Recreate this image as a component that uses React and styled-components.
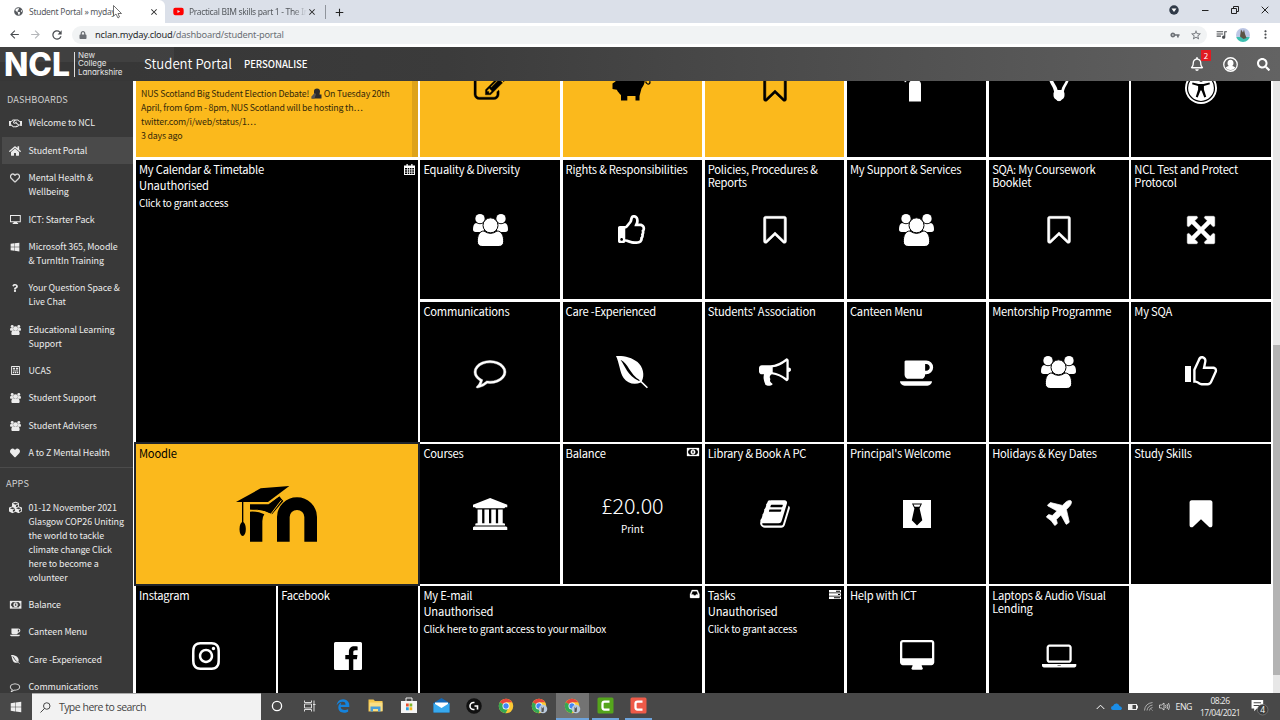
import React from "react";
import styled, { createGlobalStyle, css } from "styled-components";
import {
  FaHome,
  FaRegHeart,
  FaHeart,
  FaWindows,
  FaQuestion,
  FaRegHandshake,
  FaInstagram,
  FaSearch,
  FaRegThumbsUp,
  FaRegBell,
  FaCubes,
  FaGlobeAmericas,
  FaEdgeLegacy,
  FaYoutube,
  FaLock,
} from "react-icons/fa";
import {
  MdArrowBack,
  MdArrowForward,
  MdRefresh,
  MdStarBorder,
  MdQueueMusic,
  MdMoreVert,
  MdVpnKey,
  MdClose,
  MdAdd,
} from "react-icons/md";

const GlobalStyle = createGlobalStyle`
  * {
    box-sizing: border-box;
  }
  body {
    margin: 0;
    overflow: hidden;
    font-family: "Noto Sans CJK SC", "Open Sans", sans-serif;
  }
  svg {
    display: block;
    flex: none;
  }
`;

/* ---------- icons ---------- */

const paths = {
  comment: [
    "0 0 1792 1792",
    "M896 384q-204 0-381.5 69.5t-282 187.5-104.5 255q0 112 71.5 213.5t201.5 175.5l87 50-27 96q-24 91-70 172 152-63 275-171l43-38 57 6q69 8 130 8 204 0 381.5-69.5t282-187.5 104.5-255-104.5-255-282-187.5-381.5-69.5zm896 512q0 174-120 321.5t-326 233-450 85.5q-70 0-145-8-198 175-460 242-49 14-114 22h-5q-15 0-27-10.5t-16-27.5v-1q-3-4-.5-12t2-10 4.5-9.5l6-9 7-8.5 8-9q7-8 31-34.5t34.5-38 31-39.5 32.5-51 27-59 26-76q-157-89-247.5-220t-90.5-281q0-174 120-321.5t326-233 450-85.5 450 85.5 326 233 120 321.5z",
    24,
  ],
  bookmarkO: [
    "0 0 1792 1792",
    "M1408 256h-1024v1242l423-406 89-85 89 85 423 406v-1242zm12-128q23 0 44 9 33 13 52.5 41t19.5 62v1289q0 34-19.5 62t-52.5 41q-19 8-44 8-48 0-83-32l-441-424-441 424q-36 33-83 33-23 0-44-9-33-13-52.5-41t-19.5-62v-1289q0-34 19.5-62t52.5-41q21-9 44-9h1048z",
    28,
  ],
  bookmark: [
    "0 0 1792 1792",
    "M1420 128q23 0 44 9 33 13 52.5 41t19.5 62v1289q0 34-19.5 62t-52.5 41q-19 8-44 8-48 0-83-32l-441-424-441 424q-36 33-83 33-23 0-44-9-33-13-52.5-41t-19.5-62v-1289q0-34 19.5-62t52.5-41q21-9 44-9h1048z",
  ],
  bullhorn: [
    "0 0 1792 1792",
    "M1664 640q53 0 90.5 37.5t37.5 90.5-37.5 90.5-90.5 37.5v384q0 52-38 90t-90 38q-417-347-812-380-58 19-91 66t-31 100.5 40 92.5q-20 33-23 65.5t6 58 33.5 55 48 50 61.5 50.5q-29 58-111.5 83t-168.5 11.5-132-55.5q-7-23-29.5-87.5t-32-94.5-23-89-15-101 3.5-98.5 22-110.5h-122q-66 0-113-47t-47-113v-192q0-66 47-113t113-47h480q435 0 896-384 52 0 90 38t38 90v384zm-128 604v-954q-394 302-768 343v270q377 42 768 341z",
  ],
  coffee: [
    "0 0 1920 1792",
    "M1664 640q0-80-56-136t-136-56h-64v384h64q80 0 136-56t56-136zm-1664 768h1792q0 106-75 181t-181 75h-1280q-106 0-181-75t-75-181zm1856-768q0 159-112.5 271.5t-271.5 112.5h-64v32q0 92-66 158t-158 66h-704q-92 0-158-66t-66-158v-736q0-26 19-45t45-19h1152q159 0 271.5 112.5t112.5 271.5z",
  ],
  university: [
    "0 0 1920 1792",
    "M960 0l960 384v128h-128q0 26-20.5 45t-48.5 19h-1526q-28 0-48.5-19t-20.5-45h-128v-128zm-704 640h256v768h128v-768h256v768h128v-768h256v768h128v-768h256v768h59q28 0 48.5 19t20.5 45v64h-1664v-64q0-26 20.5-45t48.5-19h59v-768zm1595 960q28 0 48.5 19t20.5 45v128h-1920v-128q0-26 20.5-45t48.5-19h1782z",
  ],
  book: [
    "0 0 1792 1792",
    "M1703 478q40 57 18 129l-275 906q-19 64-76.5 107.5t-122.5 43.5h-923q-77 0-148.5-53.5t-99.5-131.5q-24-67-2-127 0-4 3-27t4-37q1-8-3-21.5t-3-19.5q2-11 8-21t16.5-23.5 16.5-23.5q23-38 45-91.5t30-91.5q3-10 .5-30t-.5-28q3-11 17-28t17-23q21-36 42-92t25-90q1-9-2.5-32t.5-28q4-13 22-30.5t22-22.5q19-26 42.5-84.5t27.5-96.5q1-8-3-25.5t-2-26.5q2-8 9-18t18-23 17-21q8-12 16.5-30.5t15-35 16-36 19.5-32 26.5-23.5 36-11.5 47.5 5.5l-1 3q38-9 51-9h761q74 0 114 56t18 130l-274 906q-36 119-71.5 153.5t-128.5 34.5h-869q-27 0-38 15-11 16-1 43 24 70 144 70h923q29 0 56-15.5t35-41.5l300-987q7-22 5-57 38 15 59 43zm-1064 2q-4 13 2 22.5t20 9.500h608q13 0 25.500-9.500t16.500-22.500l21-64q4-13-2-22.500t-20-9.500h-608q-13 0-25.500 9.500t-16.500 22.500zm-83 256q-4 13 2 22.500t20 9.500h608q13 0 25.500-9.500t16.500-22.500l21-64q4-13-2-22.500t-20-9.500h-608q-13 0-25.500 9.500t-16.500 22.500z",
  ],
  plane: [
    "0 0 1792 1792",
    "M1568 160q44 52 12 148t-108 172l-161 161 160 696q5 19-12 33l-128 96q-7 6-19 6-4 0-7-1-15-3-21-16l-279-508-259 259 53 194q5 17-8 31l-96 96q-9 9-23 9h-2q-15-2-24-13l-189-252-252-189q-11-7-13-23-1-13 9-25l96-97q9-9 23-9 6 0 8 1l194 53 259-259-508-279q-14-8-17-24-2-16 9-27l128-128q14-13 30-8l665 159 160-160q76-76 172-108t148 12z",
    40,
  ],
  desktop: [
    "-64 0 1920 1792",
    "M1728 992v-832q0-13-9.5-22.5t-22.5-9.5h-1600q-13 0-22.5 9.5t-9.5 22.5v832q0 13 9.5 22.5t22.5 9.5h1600q13 0 22.5-9.5t9.5-22.5zm128-832v1088q0 66-47 113t-113 47h-544q0 37 16 77.5t32 71 16 43.5q0 26-19 45t-45 19h-512q-26 0-45-19t-19-45q0-14 16-44t32-70 16-78h-544q-66 0-113-47t-47-113v-1088q0-66 47-113t113-47h1600q66 0 113 47t47 113z",
  ],
  laptop: [
    "0 0 1920 1792",
    "M416 1280q-66 0-113-47t-47-113v-704q0-66 47-113t113-47h1088q66 0 113 47t47 113v704q0 66-47 113t-113 47h-1088zm-32-864v704q0 13 9.5 22.5t22.5 9.5h1088q13 0 22.5-9.5t9.5-22.5v-704q0-13-9.5-22.5t-22.5-9.5h-1088q-13 0-22.5 9.5t-9.5 22.5zm1376 928h160v96q0 40-47 68t-113 28h-1600q-66 0-113-28t-47-68v-96h1760zm-720 96q16 0 16-16t-16-16h-160q-16 0-16 16t16 16h160z",
  ],
  arrows: [
    "0 0 1792 1792",
    "M1411 541l-355 355 355 355 144-144q29-31 70-14 39 17 39 59v448q0 26-19 45t-45 19h-448q-42 0-59-40-17-39 14-69l144-144-355-355-355 355 144 144q31 30 14 69-17 40-59 40h-448q-26 0-45-19t-19-45v-448q0-42 40-59 39-17 69 14l144 144 355-355-355-355-144 144q-19 19-45 19-12 0-24-5-40-17-40-59v-448q0-26 19-45t45-19h448q42 0 59 40 17 39-14 69l-144 144 355 355 355-355-144-144q-31-30-14-69 17-40 59-40h448q26 0 45 19t19 45v448q0 42-39 59-13 5-25 5-26 0-45-19z",
    30,
  ],
  pencil: [
    "0 0 1792 1792",
    "M888 1184l116-116-152-152-116 116v56h96v96h56zm440-720q-16-16-33 1l-350 350q-17 17-1 33t33-1l350-350q17-17 1-33zm80 594v190q0 119-84.5 203.5t-203.5 84.5h-832q-119 0-203.5-84.5t-84.5-203.5v-832q0-119 84.5-203.5t203.5-84.5h832q63 0 117 25 15 7 18 23 3 17-9 29l-49 49q-14 14-32 8-23-6-45-6h-832q-66 0-113 47t-47 113v832q0 66 47 113t113 47h832q66 0 113-47t47-113v-126q0-13 9-22l64-64q15-15 35-7t20 29zm-96-738l288 288-672 672h-288v-288zm444 132l-92 92-288-288 92-92q28-28 68-28t68 28l152 152q28 28 28 68t-28 68z",
    20,
  ],
  thumb: [
    "0 0 32 32",
    "M0 10h6v16H0zM16.800 0c3 0 5.300 2.500 4.700 5.500l-1 5H28c3 0 4.800 2.600 4 5.200l-4.800 10.500c-.9 2-2.200 3.200-4.600 3.200h-6c-2.400 0-4-2.200-6-2.600H8.200V13.500L12.600 4c.7-2 1.600-4 4.200-4zm.2 2.400c-1 0-1.500 1-2 2.200l-4.400 9.500v10.300c2.600.2 4.200 2.500 6.400 2.500h5.600c1.200 0 2-.6 2.500-1.700l4.600-10.200c.4-1.200-.3-2.100-1.600-2.100H17.600l1.600-7.600c.3-1.500-.7-2.900-2.200-2.900z",
  ],
  leaf: [
    "0 0 32 32",
    "M0 0c7-.6 16 1.300 21.500 6 5.400 4.700 7.600 13 4.300 19.200l6.200 6-1.200 1-6-5.600c-6.400 2.600-13.300 1-17.200-4.600C3.700 16.200 3.500 7.300 0 0zm4.500 3.800c4.800 6.300 6.600 15.600 18.500 21.300l.8-.9C13.500 18.300 12.700 7.500 4.500 3.800z",
  ],
  facebook: [
    "0 0 28 28",
    "M1.500 0h25A1.500 1.500 0 0 1 28 1.500v25a1.500 1.500 0 0 1-1.500 1.500h-7.200V17.200h3.600l.6-4.200h-4.200v-2.700c0-1.200.4-2 2.100-2h2.200V4.500c-.4 0-1.700-.2-3.300-.2-3.200 0-5.400 2-5.400 5.600V13h-3.600v4.200h3.600V28H1.500A1.500 1.500 0 0 1 0 26.500v-25A1.500 1.500 0 0 1 1.500 0z",
  ],
  tie: [
    "0 0 28 28",
    "M0 0h28v28H0zM9 3.400l2.400 5.200L8.800 20.300l5.200 5.200 5.300-5.200L16.600 8.600 19 3.400zm1.500 1h7l-1.200 2.400h-4.600z",
  ],
  money: [
    "0 0 24 16",
    "M0 0h24v16H0zM5 2.200a3 3 0 0 1-3 3v5.600a3 3 0 0 1 3 3h14a3 3 0 0 1 3-3V5.200a3 3 0 0 1-3-3zM12 3c2.800 0 4.500 2 4.500 5s-1.700 5-4.500 5-4.500-2-4.500-5S9.200 3 12 3zm-1.500 2.500v5h3v-5z",
    0.6,
  ],
  calendar: [
    "0 0 22 22",
    "M5 0h2.500v3h7V0H17v3h5v19H0V3h5zM2 8v3h4V8zm5.500 0v3h3V8zm4.500 0v3h3V8zm4.500 0v3H20V8zM2 12.500v3h4v-3zm5.500 0v3h3v-3zm4.500 0v3h3v-3zm4.500 0v3H20v-3zM2 17v3h4v-3zm5.500 0v3h3v-3zm4.500 0v3h3v-3zm4.500 0v3H20v-3z",
  ],
  inbox: ["0 0 20 17", "M4 0h12l4 9v6.500a1.500 1.500 0 0 1-1.500 1.500h-17A1.500 1.500 0 0 1 0 15.500V9zm1.500 2.500L2.800 9.300H7l1.400 2.500h3.200L13 9.300h4.200l-2.700-6.800z", 0.6],
  tasks: ["0 0 24 18", "M0 0h24v5H0zM0 6.500h24v5H0zM0 13h24v5H0zM14 1.500v2h8v-2zM18 8v2h4V8zM10 14.500v2h12v-2z"],
  monitor: ["0 0 24 20", "M0 0h24v16h-8v2h2v2H6v-2h2v-2H0zM2.200 2.200v11.600h19.600V2.200z"],
  ucas: [
    "0 0 20 20",
    "M2 0h16a2 2 0 0 1 2 2v16a2 2 0 0 1-2 2H2a2 2 0 0 1-2-2V2a2 2 0 0 1 2-2zm0 2v16h16V2zM4 4h5v4H4zM11 4h5v4h-5zM4 10h12v1.500H4zM4 13h3v3H4zM8.500 13h3v3h-3zM13 13h3v3h-3z",
  ],
  piggy: [
    "0 0 32 32",
    "M-3.500 11.500l3-2V5H28c1.500 3 .8 7.500-2.500 11.500L23.500 24v4.500h-4V24h-8.200v4.500H5V23C3.500 22 1.700 19.500.8 17.800L-3.500 17zM29 9.500c1 4.500 7 4 5.300-.5L33 9.500c1.200 2.300-2 3-2.500 0z",
  ],
  extinguisher: ["0 0 32 32", "M8 29.500V12c0-2 2-3.600 3-3.800V5h6v3.200c1.200.4 3 2 3 3.800v17.500zM3 8l6-4v2l-5 4.500z"],
  bulb: [
    "0 0 32 32",
    "M6.500 3v6c1 3.400 4 6 4.600 11-.6.600-.6 1.600-.6 2.200 0 1 0 1.800.2 2.600.4 1.600 1.700 2.400 2.900 3.200 1 1.600 3.800 1.600 4.800 0 1.200-.8 2.500-1.600 2.900-3.200.2-.8.200-1.600.2-2.600 0-.6 0-1.600-.6-2.200.6-5 3.600-7.600 4.600-11V3h-2.500v5.500c-1 3-4 5.500-4.600 9.500h-3.800c-.6-4-3.600-6.500-4.600-9.500V3z",
  ],
};

// third entry of a path is an optional outline that thickens the glyph
const Glyph = ({ name, h = 32 }) => {
  const [box, d, weight] = paths[name];
  const [, , bw, bh] = box.split(" ").map(Number);
  return (
    <svg width={(h * bw) / bh} height={h} viewBox={box} fill="currentColor" fillRule="evenodd" overflow="visible">
      <path d={d} stroke={weight ? "currentColor" : "none"} strokeWidth={weight || 0} />
    </svg>
  );
};

const People = ({ w = 35, gap = "#000" }) => (
  <svg width={w} height={(w * 32) / 35} viewBox="0 0 105 96" fill="currentColor">
    <circle cx="21" cy="14" r="14" />
    <circle cx="84" cy="14" r="14" />
    <path d="M9 27q12 7 24 0V54H8Q0 54 0 46 0 30 9 27zM96 27q-12 7-24 0V54h25q8 0 8-8 0-16-9-19z" />
    <g stroke={gap} strokeWidth="3">
      <path d="M33 51q19.500 14 39 0c14 0 20 14 20 31q0 15.500-15 15.500H28Q13 97.500 13 82C13 65 19 51 33 51z" />
      <circle cx="52.500" cy="34" r="22.500" />
    </g>
  </svg>
);

const Access = () => (
  <svg width="32" height="32" viewBox="0 0 32 32">
    <circle cx="16" cy="16" r="16" fill="#fff" />
    <circle cx="16" cy="16" r="13.500" fill="none" stroke="#000" strokeWidth="1.200" />
    <circle cx="16" cy="7.500" r="2.200" />
    <path d="M7.500 10.500l6 1.600h5l6-1.600.4 1.800-6 1.700v3.500l2.300 7.300-1.900.7-2.800-7h-1l-2.800 7-1.900-.7 2.300-7.300V14l-6-1.700z" />
  </svg>
);

const MoodleLogo = () => (
  <svg width="85" height="60" viewBox="705 73 255 180">
    <path d="M853 246V172a41 40 0 0 1 82 0V246" fill="none" stroke="#000" strokeWidth="38" />
    <path d="M753 246v-90q20-2 43 8-6 8-6 20v62z" />
    <path d="M711 127L785 86 871 79 807 127z" />
    <path d="M753 133h54l34-24 12 15-34 40-23-10-43-4z" />
    <path d="M753 152q25-2 38 3l24 9 32-42" fill="none" stroke="#fbb91c" strokeWidth="3" />
    <path d="M753 132h55l34-25 10 12" fill="none" stroke="#fbb91c" strokeWidth="3.500" />
    <path d="M731 124v66" stroke="#000" strokeWidth="4" />
    <ellipse cx="731" cy="208" rx="9.500" ry="21" />
  </svg>
);

const UserCircle = () => (
  <svg width="15" height="15" viewBox="0 0 30 30">
    <circle cx="15" cy="15" r="13.500" fill="none" stroke="#fff" strokeWidth="2.600" />
    <path d="M15 5.500c4 0 6 2.800 6 6.500 0 3-1.200 5-2.800 6 3 .8 5.800 2 6.600 3.500A12 12 0 0 1 15 26a12 12 0 0 1-9.800-4.500c.8-1.500 3.600-2.700 6.600-3.500C10.200 17 9 15 9 12c0-3.700 2-6.500 6-6.500z" fill="#fff" />
  </svg>
);

/* ---------- browser chrome ---------- */

const Screen = styled.div`
  width: 1280px;
  height: 720px;
  display: flex;
  flex-direction: column;
  overflow: hidden;
  background: #fff;
`;

const TabStrip = styled.div`
  height: 23px;
  flex: none;
  display: flex;
  background: #dbe0e9;
  font-family: "Noto Sans", sans-serif;
  font-size: 8.5px;
  color: #55595e;
`;

const Tab = styled.div`
  width: ${(p) => (p.$active ? 165 : 160)}px;
  display: flex;
  align-items: center;
  padding: 0 6px 0 ${(p) => (p.$active ? 14 : 8)}px;
  border-radius: 0 6px 0 0;
  background: ${(p) => (p.$active ? "#fff" : "transparent")};
  white-space: nowrap;

  span {
    width: ${(p) => (p.$active ? 120 : 118)}px;
    margin-left: ${(p) => (p.$active ? 6 : 5)}px;
    letter-spacing: ${(p) => (p.$active ? -0.28 : -0.33)}px;
    ${(p) =>
      !p.$active &&
      css`
        mask-image: linear-gradient(90deg, #000 88%, transparent);
      `}
  }
`;

const NewTab = styled.div`
  display: flex;
  align-items: center;
  height: 14px;
  margin-top: 5px;
  padding-left: 7px;
  border-left: 1px solid #8f949b;
  color: #222;
`;

const WindowButtons = styled.div`
  margin-left: auto;
  display: flex;
  align-items: center;
  gap: 22px;
  padding: 0 11px 3px 0;
  color: #222;
`;

const Toolbar = styled.div`
  height: 24px;
  flex: none;
  display: flex;
  align-items: center;
  gap: 8px;
  padding: 0 8px 1px;
  background: #fff;
  color: #4a4d51;
`;

const Address = styled.div`
  flex: 1;
  height: 18px;
  display: flex;
  align-items: center;
  padding: 0 5px 0 7px;
  border-radius: 9px;
  background: #f1f3f4;
  font-family: "Noto Sans", sans-serif;
  font-size: 9.3px;
  color: #6b6f74;

  p {
    flex: 1;
    margin: 0 0 0 8px;
    letter-spacing: -0.22px;
  }
  b {
    font-weight: 400;
    color: #26282b;
  }
  svg + svg {
    margin-left: 10px;
  }
`;

const Avatar = styled.div`
  width: 14px;
  height: 14px;
  margin: 0 1px 0 0;
  border-radius: 50%;
  background: linear-gradient(#bcc6e4 65%, #3dbfb0 65%);
  display: flex;
  justify-content: center;
`;

/* ---------- portal ---------- */

const Portal = styled.div`
  height: 646px;
  flex: none;
  display: flex;
  flex-direction: column;
`;

const Header = styled.header`
  height: 34px;
  flex: none;
  display: flex;
  align-items: center;
  padding: 0 10px 0 5px;
  background: linear-gradient(#ffffff0c, #ffffff0c) 0 0 / 174px 15px no-repeat,
    linear-gradient(90deg, #373737 10%, #3b3b3b 35%, #636363);
  color: #fff;
`;

const CollegeName = styled.div`
  width: 60px;
  height: 25px;
  margin-left: 3px;
  padding-left: 3px;
  border-left: 1px solid #ddd;
  font: 8px/8.7px Inter, sans-serif;
  font-feature-settings: "cv11";
  letter-spacing: -0.05px;
  color: #e4e4e4;

  div {
    margin-top: -1px;
  }
`;

const PageTitle = styled.h1`
  margin: 0 0 0 10px;
  width: 100px;
  font-weight: 350;
  font-size: 13.2px;
  line-height: 20px;
  letter-spacing: 0;
  white-space: nowrap;
`;

const Personalise = styled.div`
  font-weight: 500;
  font-size: 9.6px;
  line-height: 20px;
  letter-spacing: -0.05px;
`;

const HeaderIcons = styled.div`
  position: relative;
  margin-left: auto;
  display: flex;
  align-items: center;
  gap: 19px;
`;

const Badge = styled.span`
  position: absolute;
  left: 11px;
  top: -7px;
  width: 10px;
  height: 11px;
  background: #e01b22;
  font-size: 8px;
  line-height: 11px;
  text-align: center;
`;

const Body = styled.div`
  flex: 1;
  display: flex;
  overflow: hidden;
`;

const Sidebar = styled.nav`
  width: 133px;
  height: 100%;
  flex: none;
  overflow: hidden;
  background: #393939;
  color: #ececec;
`;

const SectionTitle = styled.div`
  height: 28.8px;
  padding: 9px 0 0 7px;
  font-size: 9.2px;
  line-height: 19px;
  color: #cfcfcf;
  letter-spacing: 0.1px;

  & ~ & {
    height: 27.5px;
    padding: 6.5px 0 0 6px;
    border-top: 1px solid #4b4b4b;
  }
`;

const NavItem = styled.div`
  display: flex;
  margin-left: 2px;
  padding: 6.68px 0;
  background: ${(p) => (p.$active ? "#4a4a4a" : "transparent")};
  font-size: 8.9px;
  line-height: 14px;
  letter-spacing: -0.08px;
  white-space: pre;

  i {
    width: 26.5px;
    height: 14px;
    display: flex;
    align-items: center;
    justify-content: center;
  }
`;

const Board = styled.main`
  flex: 1;
  overflow: hidden;
  padding-left: 2px;
  border-left: 1px solid #fff;
`;

const Grid = styled.div`
  display: grid;
  grid-template-columns: repeat(8, 139.5px);
  grid-auto-rows: 139.4px;
  gap: 2.7px;
  margin-top: -63px;
`;

const Tile = styled.section`
  position: relative;
  display: flex;
  align-items: center;
  justify-content: center;
  grid-column: span ${(p) => p.$w || 1};
  grid-row: span ${(p) => p.$h || 1};
  background: ${(p) => (p.$gold ? "#fbb91c" : "#000")};
  color: ${(p) => (p.$gold ? "#000" : "#fff")};
  ${(p) =>
    p.$focus &&
    css`
      outline: 2px solid #20242b;
    `}
`;

/* text sits over the centred icon */
const TileText = styled.div`
  position: absolute;
  left: 3px;
  top: 2.5px;
  right: 3px;
  font-size: 11.2px;
  line-height: 13.5px;
  letter-spacing: -0.22px;
  white-space: pre;

  p {
    margin: 0;
    padding-top: 3px;
    letter-spacing: -0.14px;
  }
  small {
    display: block;
    padding-top: 3.5px;
    font-size: 10px;
    letter-spacing: -0.23px;
  }
`;

const Corner = styled.div`
  position: absolute;
  right: 3px;
  top: 4px;
`;

const Tweet = styled.div`
  align-self: stretch;
  flex: 1;
  padding: 69px 0 0 5px;
  border-right: 6px solid #dea31b;
  font-size: 8.8px;
  line-height: 14px;
  letter-spacing: -0.17px;
  white-space: pre;
  color: #35290a;
`;

const Amount = styled.div`
  padding-top: 3px;
  text-align: center;
  font-weight: 300;
  font-size: 21.5px;
  line-height: 26px;
  letter-spacing: -0.1px;

  div {
    padding-top: 2px;
    font-weight: 400;
    font-size: 10px;
    line-height: 18px;
    letter-spacing: 0;
  }
`;

const Scrollbar = styled.div`
  width: 7px;
  height: 100%;
  flex: none;
  padding-top: 264px;
  background: #e7e7e7;

  div {
    height: 330px;
    background: #b3b3b3;
  }
`;

/* ---------- taskbar ---------- */

const Taskbar = styled.footer`
  height: 27px;
  flex: none;
  display: flex;
  align-items: stretch;
  background: #484848;
  color: #eee;
  font-family: "Open Sans", sans-serif;
`;

const StartButton = styled.div`
  width: 32px;
  display: grid;
  place-items: center;
`;

const SearchBox = styled.div`
  width: 229px;
  display: flex;
  align-items: center;
  gap: 8px;
  padding-left: 8px;
  background: #f2f2f2;
  border-top: 1px solid #aaa;
  color: #444;
  font-size: 10.5px;
  letter-spacing: -0.6px;
  word-spacing: 0.5px;
`;

const AppButton = styled.div`
  width: ${(p) => (p.$open && !p.$active ? 26.8 : 32.8)}px;
  margin: 0 ${(p) => (p.$open && !p.$active ? 3 : 0)}px;
  display: grid;
  place-items: center;
  background: ${(p) => (p.$active ? "#737373" : "transparent")};
  border-bottom: 2px solid ${(p) => (p.$open ? "#6ea4dc" : "transparent")};
`;

const Tray = styled.div`
  margin-left: auto;
  display: flex;
  align-items: center;
  padding-right: 11px;
  font-size: 8.8px;
  letter-spacing: -0.5px;

  svg {
    margin-right: 6px;
  }
`;

const Clock = styled.div`
  width: 40px;
  margin: 0 11px 0 8px;
  text-align: center;
  font-size: 8.5px;
  line-height: 12px;
`;

const Chrome = ({ badge }) => (
  <svg width="17" height="16" viewBox="0 0 34 32">
    <circle cx="16" cy="16" r="14.500" fill="#fcc934" />
    <path d="M16 16L3.500 8.700A14.500 14.500 0 0 1 28.500 8.700H16z" fill="#e8453c" />
    <path d="M16 16L3.500 8.700A14.500 14.500 0 0 0 15 30.500l6-11z" fill="#34a853" />
    <circle cx="16" cy="16" r="7" fill="#fff" />
    <circle cx="16" cy="16" r="5.400" fill="#4285f4" />
    {badge && (
      <g>
        <circle cx="24" cy="22" r="8.500" fill="#b9c9dc" />
        <path d="M21 17l2 4 2-4 1 5-1 6h-4z" fill="#555" />
      </g>
    )}
  </svg>
);

const Camtasia = ({ color }) => (
  <svg width="17" height="17" viewBox="0 0 34 34">
    <rect x="1" y="1" width="32" height="32" rx="3" fill={color} />
    <path d="M25 9H15q-4 0-4 4v8q0 4 4 4h10" fill="none" stroke="#fff" strokeWidth="4.500" />
  </svg>
);

const apps = [
  { icon: <svg width="12" height="12" viewBox="0 0 12 12"><circle cx="6" cy="6" r="4.600" fill="none" stroke="#fff" strokeWidth="1.300" /></svg> },
  {
    icon: (
      <svg width="12" height="12" viewBox="0 0 24 24" fill="none" stroke="#eee" strokeWidth="1.800">
        <path d="M1 1v4h14V1M1 23v-4h14v4M1 8h14v8H1zM20 1v22M18 9h5" />
      </svg>
    ),
  },
  { icon: <FaEdgeLegacy size={14} color="#1583dc" /> },
  {
    icon: (
      <svg width="15" height="13" viewBox="0 0 30 26">
        <path d="M1 1h10l3 3h15v21H1z" fill="#f6c84c" />
        <path d="M3 7h26v17H3z" fill="#fbdf85" />
        <path d="M5 25V15h20v10h-5v-5H10v5z" fill="#4a9ed8" />
      </svg>
    ),
  },
  {
    icon: (
      <svg width="16" height="17" viewBox="0 0 32 34">
        <path d="M10 9V2h12v7" fill="none" stroke="#eee" strokeWidth="2" />
        <path d="M0 8h32v24H0z" fill="#f5f5f5" />
        <path d="M10 13h5.500v6H10z" fill="#e8502f" />
        <path d="M17 13h5.500v6H17z" fill="#7fb72b" />
        <path d="M10 20.500h5.500v6H10z" fill="#28a0e0" />
        <path d="M17 20.500h5.500v6H17z" fill="#f7b51c" />
      </svg>
    ),
  },
  {
    icon: (
      <svg width="17" height="15" viewBox="0 0 34 30">
        <path d="M1 10L17 0l16 10v19H1z" fill="#1268b8" />
        <path d="M4 9h26v12H4z" fill="#fff" />
        <path d="M1 10l16 10 16-10v19H1z" fill="#37a9ee" />
      </svg>
    ),
  },
  {
    icon: (
      <svg width="16" height="16" viewBox="0 0 32 32">
        <circle cx="16" cy="16" r="15.500" fill="#111" />
        <path d="M17 9h-2a7 7 0 0 0 0 14h2M17 16h6v7" fill="none" stroke="#fff" strokeWidth="3.200" />
      </svg>
    ),
  },
  { icon: <Chrome /> },
  { icon: <Chrome badge /> },
  { icon: <Chrome badge />, active: true, open: true },
  { icon: <Camtasia color="#55a51c" />, open: true },
  { icon: <Camtasia color="#ee5a48" />, open: true },
];

/* ---------- data ---------- */

const dashboards = [
  [<FaRegHandshake size={13} />, "Welcome to NCL"],
  [<FaHome size={12} />, "Student Portal"],
  [<FaRegHeart size={10} stroke="currentColor" strokeWidth="20" />, "Mental Health &\nWellbeing"],
  [<Glyph name="monitor" h={9} />, "ICT: Starter Pack"],
  [<FaWindows size={10} />, "Microsoft 365, Moodle\n& TurnItIn Training"],
  [<FaQuestion size={8} />, "Your Question Space &\nLive Chat"],
  [<People w={11} gap="none" />, "Educational Learning\nSupport"],
  [<Glyph name="ucas" h={9} />, "UCAS"],
  [<People w={11} gap="none" />, "Student Support"],
  [<People w={11} gap="none" />, "Student Advisers"],
  [<FaHeart size={10} />, "A to Z Mental Health"],
];

const portalApps = [
  [<FaCubes size={13} />, "01-12 November 2021\nGlasgow COP26 Uniting\nthe world to tackle\nclimate change Click\nhere to become a\nvolunteer"],
  [<Glyph name="money" h={7.5} />, "Balance"],
  [<Glyph name="coffee" h={10} />, "Canteen Menu"],
  [<Glyph name="leaf" h={9} />, "Care -Experienced"],
  [<Glyph name="comment" h={10} />, "Communications"],
];

const tiles = [
  {
    w: 2,
    gold: true,
    body: (
      <Tweet>
        {"NUS Scotland Big Student Election Debate! "}
        <svg width="11" height="11" viewBox="0 0 22 22" style={{ display: "inline", verticalAlign: "-2px" }}>
          <path d="M6 6q0-5 6-5t6 6l-1 6h4v8H1q0-5 5-6z" fill="#2c2c2c" />
          <path d="M1 17l6-7 3 2-3 9H1z" fill="#555" />
        </svg>
        {" On Tuesday 20th\nApril, from 6pm - 8pm, NUS Scotland will be hosting th…\ntwitter.com/i/web/status/1…\n3 days ago"}
      </Tweet>
    ),
  },
  { gold: true, glyph: "pencil" },
  { gold: true, glyph: "piggy" },
  { gold: true, glyph: "bookmarkO" },
  { glyph: "extinguisher" },
  { glyph: "bulb" },
  { body: <Access /> },
  { w: 2, h: 2, title: "My Calendar & Timetable", sub: "Unauthorised", note: "Click to grant access", corner: <Glyph name="calendar" h={11} /> },
  { title: "Equality & Diversity", body: <People /> },
  { title: "Rights & Responsibilities", body: <FaRegThumbsUp size={29} /> },
  { title: "Policies, Procedures &\nReports", glyph: "bookmarkO" },
  { title: "My Support & Services", body: <People /> },
  { title: "SQA: My Coursework\nBooklet", glyph: "bookmarkO" },
  { title: "NCL Test and Protect\nProtocol", glyph: "arrows" },
  { title: "Communications", glyph: "comment" },
  { title: "Care -Experienced", glyph: "leaf" },
  { title: "Students' Association", glyph: "bullhorn" },
  { title: "Canteen Menu", glyph: "coffee" },
  { title: "Mentorship Programme", body: <People /> },
  { title: "My SQA", glyph: "thumb" },
  { w: 2, gold: true, focus: true, title: "Moodle", body: <MoodleLogo /> },
  { title: "Courses", glyph: "university" },
  {
    title: "Balance",
    corner: <Glyph name="money" h={8} />,
    body: (
      <Amount>
        £20.00<div>Print</div>
      </Amount>
    ),
  },
  { title: "Library & Book A PC", glyph: "book" },
  { title: "Principal's Welcome", glyph: "tie", size: 28 },
  { title: "Holidays & Key Dates", glyph: "plane" },
  { title: "Study Skills", glyph: "bookmark" },
  { title: "Instagram", body: <FaInstagram size={32} /> },
  { title: "Facebook", glyph: "facebook", size: 28 },
  { w: 2, title: "My E-mail", sub: "Unauthorised", note: "Click here to grant access to your mailbox", corner: <Glyph name="inbox" h={8} /> },
  { title: "Tasks", sub: "Unauthorised", note: "Click to grant access", corner: <Glyph name="tasks" h={9} /> },
  { title: "Help with ICT", glyph: "desktop" },
  { title: "Laptops & Audio Visual\nLending", glyph: "laptop" },
];

const Pointer = styled.svg`
  position: absolute;
  left: 113px;
  top: 5px;
`;

const App = () => {
  return (
    <Screen>
      <GlobalStyle />
      <TabStrip>
        <Tab $active>
          <FaGlobeAmericas size={9} />
          <span>Student Portal » myday</span>
          <MdClose size={10} color="#222" />
        </Tab>
        <Tab>
          <FaYoutube size={11} color="#f00" />
          <span>Practical BIM skills part 1 - The In</span>
          <MdClose size={10} color="#222" />
        </Tab>
        <NewTab>
          <MdAdd size={13} />
        </NewTab>
        <WindowButtons>
          <svg width="10" height="10" viewBox="0 0 20 20">
            <circle cx="10" cy="10" r="9.500" fill="#303a48" />
            <path d="M5 7h10l-5 7z" fill="#fff" />
          </svg>
          <svg width="8" height="8" viewBox="0 0 8 8" stroke="currentColor"><path d="M1 4.500h6.500" /></svg>
          <svg width="8" height="8" viewBox="0 0 8 8" fill="none" stroke="currentColor">
            <path d="M.5 2.500h5v5h-5zM2.500 2.500v-2h5v5h-2" />
          </svg>
          <svg width="8" height="8" viewBox="0 0 8 8" stroke="currentColor"><path d="M.7.7l6.600 6.600M7.300.7L.7 7.300" /></svg>
        </WindowButtons>
      </TabStrip>
      <Toolbar>
        <MdArrowBack size={13} />
        <MdArrowForward size={13} color="#b5b7ba" />
        <MdRefresh size={14} />
        <Address>
          <FaLock size={8} />
          <p>
            <b>nclan.myday.cloud</b>/dashboard/student-portal
          </p>
          <MdVpnKey size={10} />
          <MdStarBorder size={12} />
        </Address>
        <MdQueueMusic size={13} />
        <Avatar>
          <svg width="8" height="12" viewBox="0 0 16 24">
            <path d="M4 3l4 6 2-6 2 9 3 8-6 2-7-5z" fill="#5b5344" />
          </svg>
        </Avatar>
        <MdMoreVert size={13} />
      </Toolbar>

      <Portal>
        <Header>
          <svg width="66" height="26" viewBox="0 0 66 26" overflow="visible">
            <text x="-1" y="24.500" textLength="66" lengthAdjust="spacingAndGlyphs" fontFamily="Inter" fontWeight="800" fontSize="32" fill="#fff">
              NCL
            </text>
          </svg>
          <CollegeName>
            <div>
              New
              <br />
              College
              <br />
              Lanarkshire
            </div>
          </CollegeName>
          <PageTitle>Student Portal</PageTitle>
          <Personalise>PERSONALISE</Personalise>
          <HeaderIcons>
            <FaRegBell size={14} />
            <Badge>2</Badge>
            <UserCircle />
            <FaSearch size={13} />
          </HeaderIcons>
        </Header>
        <Body>
          <Sidebar>
            <SectionTitle>DASHBOARDS</SectionTitle>
            {dashboards.map(([icon, label]) => (
              <NavItem key={label} $active={label === "Student Portal"}>
                <i>{icon}</i>
                {label}
              </NavItem>
            ))}
            <SectionTitle>APPS</SectionTitle>
            {portalApps.map(([icon, label]) => (
              <NavItem key={label}>
                <i>{icon}</i>
                {label}
              </NavItem>
            ))}
          </Sidebar>
          <Board>
            <Grid>
              {tiles.map((t, i) => (
                <Tile key={i} $w={t.w} $h={t.h} $gold={t.gold} $focus={t.focus}>
                  {t.glyph ? <Glyph name={t.glyph} h={t.size} /> : t.body}
                  {t.title && (
                    <TileText>
                      {t.title}
                      {t.sub && <p>{t.sub}</p>}
                      {t.note && <small>{t.note}</small>}
                    </TileText>
                  )}
                  {t.corner && <Corner>{t.corner}</Corner>}
                </Tile>
              ))}
            </Grid>
          </Board>
          <Scrollbar>
            <div />
          </Scrollbar>
        </Body>
      </Portal>

      <Taskbar>
        <StartButton>
          <FaWindows size={12} />
        </StartButton>
        <SearchBox>
          <svg width="11" height="11" viewBox="0 0 22 22" fill="none" stroke="#333" strokeWidth="1.800">
            <circle cx="13.500" cy="8" r="6.500" />
            <path d="M9 13l-8 8" />
          </svg>
          Type here to search
        </SearchBox>
        {apps.map((a, i) => (
          <AppButton key={i} $active={a.active} $open={a.open}>
            {a.icon}
          </AppButton>
        ))}
        <Tray>
          <svg width="9" height="6" viewBox="0 0 9 6" fill="none" stroke="#fff"><path d="M.7 5L4.500 1.200 8.300 5" /></svg>
          <svg width="11" height="7" viewBox="0 0 22 14"><path d="M4 14a4 4 0 0 1 0-8Q6 0 12 1q4 1 5 5 5 1 5 5l-2 3z" fill="#1b8ee8" /></svg>
          <svg width="10" height="6" viewBox="0 0 20 12"><path d="M0 0h18v3h2v6h-2v3H0zM9 2v8h7V2z" fill="#eee" fillRule="evenodd" /></svg>
          <svg width="9" height="9" viewBox="0 0 18 18" fill="none" stroke="#ccc" strokeWidth="1.500">
            <path d="M1 17Q2 3 17 1M6 17q1-9 11-11M11 17q0-5 6-6M15 15l2 2" />
          </svg>
          <svg width="11" height="9" viewBox="0 0 22 18" fill="none" stroke="#eee" strokeWidth="1.500">
            <path d="M1 6h4l5-4v14l-5-4H1zM13 6q2 3 0 6M16 4q3 5 0 10M19 2q4 7 0 14" />
          </svg>
          ENG
          <Clock>
            08:26
            <br />
            17/04/2021
          </Clock>
          <svg width="18" height="18" viewBox="0 0 34 34" style={{ marginRight: 0 }}>
            <path d="M1 4h22v16H11l-5 5v-5H1z" fill="#fff" />
            <path d="M5 9h14M5 14h14" stroke="#484848" strokeWidth="2" />
            <circle cx="22" cy="22" r="10" fill="#3c3c3c" stroke="#999" />
            <text x="22" y="28" textAnchor="middle" fontFamily="Open Sans" fontSize="16" fill="#fff">4</text>
          </svg>
        </Tray>
      </Taskbar>
      <Pointer width="9" height="14" viewBox="0 0 18 28">
        <path d="M1 1v21l5-4 4 8 3-2-3-7h7z" fill="#fff" stroke="#444" strokeWidth="1.500" />
      </Pointer>
    </Screen>
  );
};

export default App;
